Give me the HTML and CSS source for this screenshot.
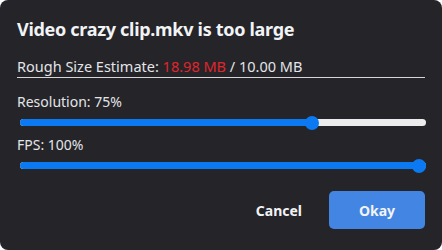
FILE: index.html
```html
<!DOCTYPE html>
<html lang="en">
<head>
    <meta charset="UTF-8">
    <meta name="viewport" content="width=device-width, initial-scale=1.0">
    <title>Video too large</title>
    <link rel="stylesheet" href="styles.css">
</head>
<body>
    <div class="modal">
        <h1 class="modal-title">Video crazy clip.mkv is too large</h1>

        <div class="estimate">
            Rough Size Estimate: <span class="over">18.98 MB</span> / 10.00 MB
        </div>

        <div class="setting">
            <label>Resolution: 75%</label>
            <div class="slider">
                <div class="slider-fill" style="width: 292px;"></div>
                <div class="slider-thumb" style="left: 285px;"></div>
            </div>
        </div>

        <div class="setting">
            <label>FPS: 100%</label>
            <div class="slider">
                <div class="slider-fill" style="width: 100%;"></div>
                <div class="slider-thumb" style="left: 392px;"></div>
            </div>
        </div>

        <div class="modal-footer">
            <button class="btn btn-link">Cancel</button>
            <button class="btn btn-primary">Okay</button>
        </div>
    </div>
</body>
</html>
```

FILE: styles.css
```css
:root {
    --bg: #ffffff;
    --modal: #242429;
    --text: #f2f3f5;
    --text-muted: #e3e5e8;
    --danger: #e0262c;
    --blue: #0b7af2;
    --track: #ececec;
    --button: #4385e3;
}

* {
    margin: 0;
    padding: 0;
    box-sizing: border-box;
    font-family: 'Noto Sans', 'Open Sans', sans-serif;
}

body {
    background-color: var(--bg);
}

.modal {
    width: 442px;
    height: 250px;
    background-color: var(--modal);
    border-radius: 8px;
    padding: 16px 17px 0 17px;
    color: var(--text);
}

.modal-title {
    font-size: 18px;
    font-weight: 700;
    line-height: 26px;
    letter-spacing: -0.3px;
}

.estimate {
    margin-top: 14px;
    font-size: 14.5px;
    line-height: 20px;
    color: var(--text-muted);
    border-bottom: 1px solid #d6d6d9;
    padding-bottom: 1px;
}

.over {
    color: var(--danger);
}

.setting {
    margin-top: 14px;
}

.setting + .setting {
    margin-top: 9px;
}

.setting label {
    display: block;
    font-size: 14px;
    line-height: 20px;
    color: var(--text-muted);
}

.slider {
    position: relative;
    margin: 7px 0 0 3px;
    width: 406px;
    height: 7px;
    border-radius: 4px;
    background-color: var(--track);
}

.slider-fill {
    height: 100%;
    border-radius: 4px;
    background-color: var(--blue);
}

.slider-thumb {
    position: absolute;
    top: -3.5px;
    width: 14px;
    height: 14px;
    border-radius: 50%;
    background-color: var(--blue);
}

.modal-footer {
    display: flex;
    justify-content: flex-end;
    align-items: center;
    margin-top: 22px;
}

.btn {
    border: none;
    background: none;
    font-size: 14px;
    font-weight: 700;
    color: var(--text);
    cursor: pointer;
}

.btn-link {
    margin-right: 27px;
}

.btn-primary {
    width: 96px;
    height: 38px;
    border-radius: 5px;
    background-color: var(--button);
}
```
